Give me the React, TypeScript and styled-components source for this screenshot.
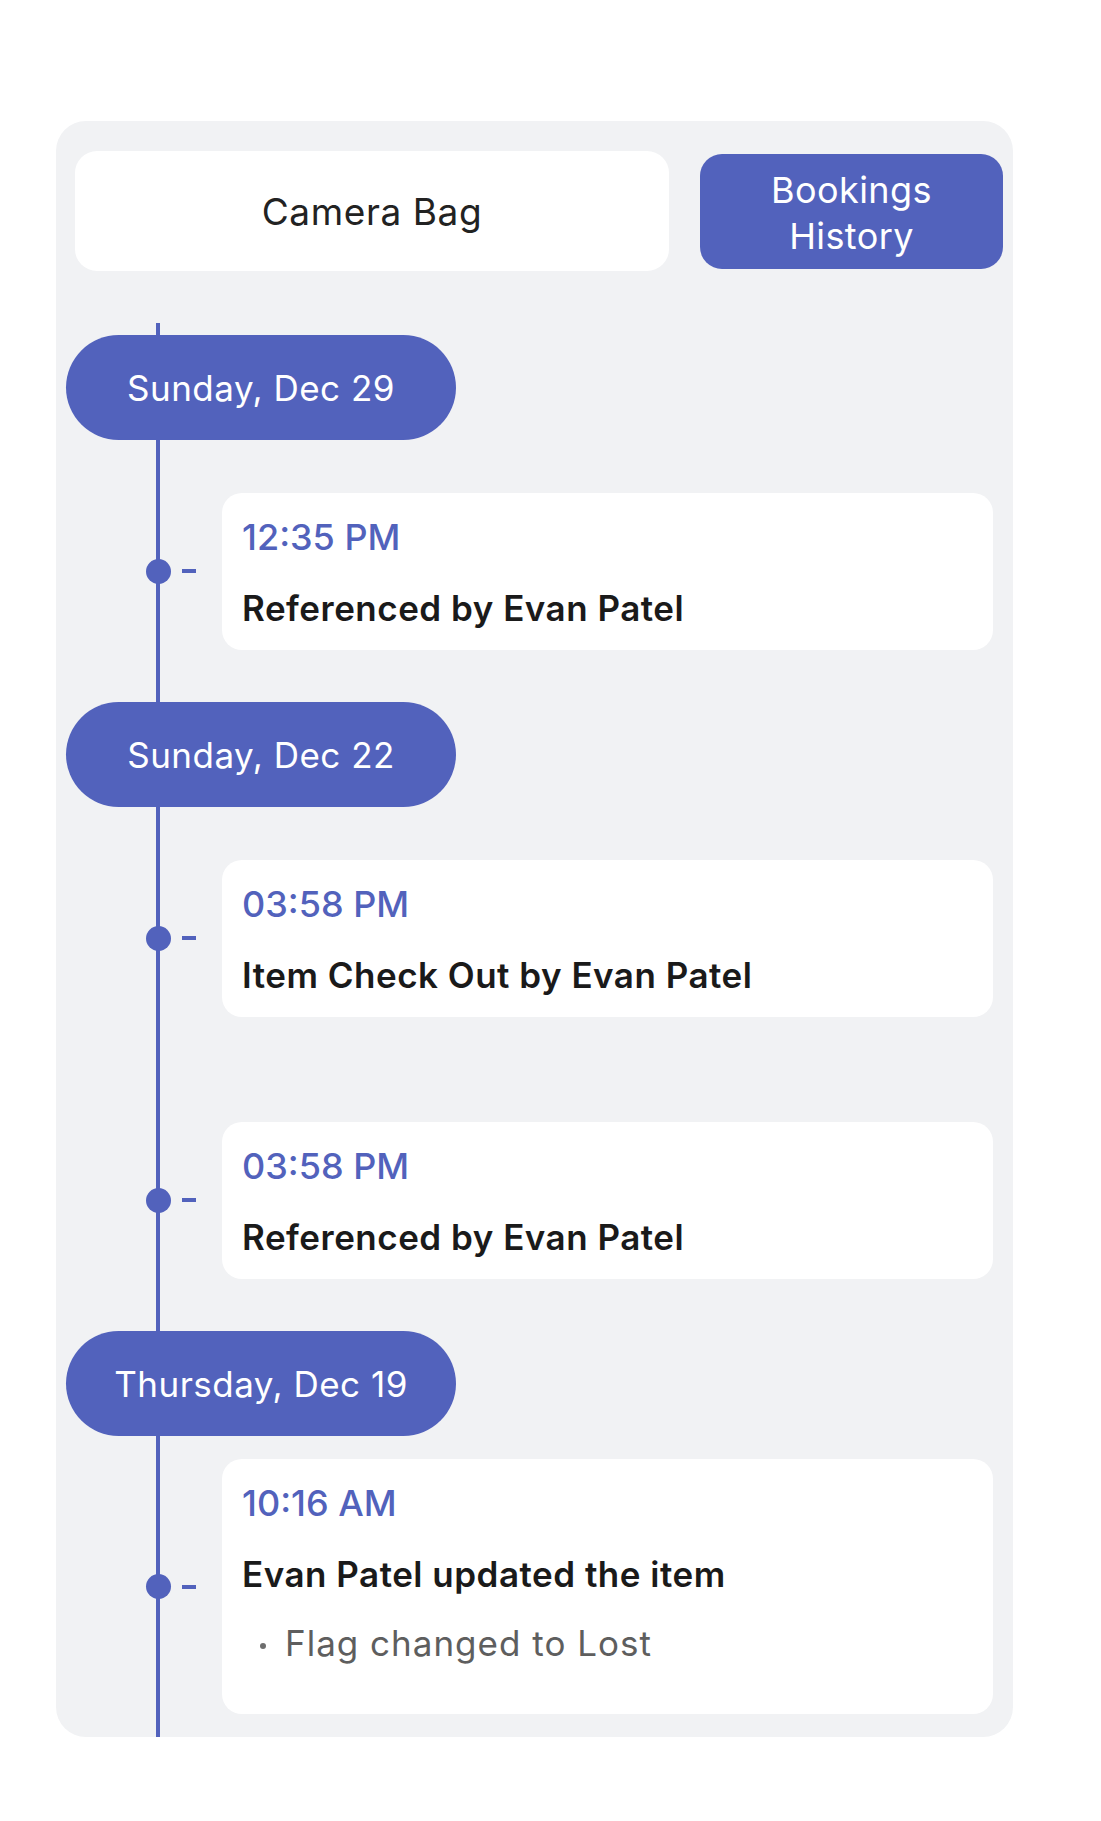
import React from "react";
import styled, { createGlobalStyle } from "styled-components";

const BLUE = "#5262bc";

const GlobalStyle = createGlobalStyle`
  html, body {
    margin: 0;
    padding: 0;
    background: #ffffff;
  }
  body {
    font-family: Inter, "Noto Sans", "Liberation Sans", sans-serif;
    -webkit-font-smoothing: antialiased;
  }
`;

type Entry = { time: string; title: string; changes?: string[] };
type Group = { date: string; entries: Entry[] };

const history: Group[] = [
  {
    date: "Sunday, Dec 29",
    entries: [{ time: "12:35 PM", title: "Referenced by Evan Patel" }],
  },
  {
    date: "Sunday, Dec 22",
    entries: [
      { time: "03:58 PM", title: "Item Check Out by Evan Patel" },
      { time: "03:58 PM", title: "Referenced by Evan Patel" },
    ],
  },
  {
    date: "Thursday, Dec 19",
    entries: [
      {
        time: "10:16 AM",
        title: "Evan Patel updated the item",
        changes: ["Flag changed to Lost"],
      },
    ],
  },
];

export default function App() {
  return (
    <Page>
      <GlobalStyle />
      <Panel>
        <Header>
          <ItemName>Camera Bag</ItemName>
          <TabButton>
            Bookings
            <br />
            History
          </TabButton>
        </Header>
        <Timeline>
          {history.map((group) => (
            <React.Fragment key={group.date}>
              <DatePill>{group.date}</DatePill>
              {group.entries.map((entry, i) => (
                <Row key={i}>
                  <Dot />
                  <Dash />
                  <Card>
                    <Time>{entry.time}</Time>
                    <Title>{entry.title}</Title>
                    {entry.changes && (
                      <Changes>
                        {entry.changes.map((c) => (
                          <li key={c}>{c}</li>
                        ))}
                      </Changes>
                    )}
                  </Card>
                </Row>
              ))}
            </React.Fragment>
          ))}
        </Timeline>
      </Panel>
    </Page>
  );
}

const Page = styled.div`
  padding: 121px 0 80px 56px;
`;

const Panel = styled.section`
  width: 957px;
  background: #f1f2f4;
  border-radius: 30px;
  padding-top: 30px;
  overflow: hidden;
`;

const Header = styled.div`
  display: flex;
  align-items: center;
  gap: 31px;
  padding: 0 10px 0 19px;
`;

const ItemName = styled.div`
  flex: 1;
  height: 120px;
  display: flex;
  align-items: center;
  justify-content: center;
  background: #ffffff;
  border-radius: 22px;
  font-size: 37px;
  letter-spacing: 0.6px;
  color: #222222;
`;

const TabButton = styled.button`
  width: 303px;
  height: 115px;
  border: none;
  border-radius: 22px;
  background: ${BLUE};
  color: #ffffff;
  font-family: inherit;
  font-size: 36px;
  letter-spacing: 0.4px;
  line-height: 46px;
  text-align: center;
  padding: 4px 0 0;
`;

const Timeline = styled.div`
  margin-top: 52px;
  padding-top: 12px;
  display: flex;
  flex-direction: column;
  background: linear-gradient(${BLUE}, ${BLUE}) no-repeat 100px 0 / 4px 100%;
`;

const DatePill = styled.div`
  margin-left: 10px;
  width: 390px;
  height: 105px;
  border-radius: 53px;
  background: ${BLUE};
  color: #ffffff;
  font-size: 35px;
  letter-spacing: 0.5px;
  display: flex;
  align-items: center;
  justify-content: center;
`;

const Row = styled.div`
  min-height: 262px;
  box-sizing: border-box;
  padding: 23px 20px 23px 90px;
  display: flex;
  align-items: center;
`;

const Dot = styled.span`
  width: 25px;
  height: 25px;
  border-radius: 50%;
  background: ${BLUE};
  flex-shrink: 0;
`;

const Dash = styled.span`
  width: 14px;
  height: 4px;
  margin-left: 11px;
  background: ${BLUE};
  flex-shrink: 0;
`;

const Card = styled.div`
  flex: 1;
  margin-left: 26px;
  background: #ffffff;
  border-radius: 20px;
  padding: 22px 20px 21px 20px;
`;

const Time = styled.div`
  font-size: 36px;
  line-height: 44px;
  font-weight: 500;
  color: ${BLUE};
`;

const Title = styled.div`
  margin-top: 28px;
  font-size: 35px;
  letter-spacing: 0.5px;
  line-height: 42px;
  font-weight: 600;
  color: #1a1a1a;
`;

const Changes = styled.ul`
  list-style: none;
  margin: 27px 0 29px;
  padding: 0;
  li {
    position: relative;
    padding-left: 43px;
    font-size: 35px;
    letter-spacing: 1px;
    line-height: 42px;
    color: #5e5e5e;
  }
  li::before {
    content: "";
    position: absolute;
    left: 18px;
    top: 21px;
    width: 6px;
    height: 6px;
    border-radius: 50%;
    background: #6e6e6e;
  }
`;
